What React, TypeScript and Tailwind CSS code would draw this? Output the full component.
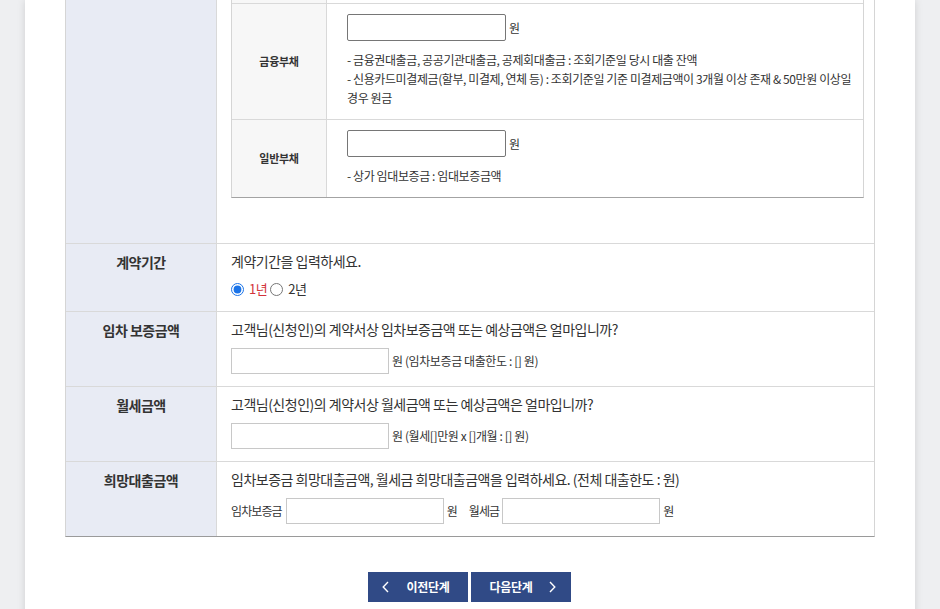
import React from 'react';

function Chevron({ dir }: { dir: 'left' | 'right' }) {
  return (
    <svg width="7" height="12" viewBox="0 0 7 12" fill="none" className="shrink-0">
      {dir === 'left' ? (
        <polyline points="6,1 1.2,6 6,11" stroke="#ffffff" strokeWidth="1.4" />
      ) : (
        <polyline points="1,1 5.8,6 1,11" stroke="#ffffff" strokeWidth="1.4" />
      )}
    </svg>
  );
}

function MoneyInput({ className = '' }: { className?: string }) {
  return (
    <input
      type="text"
      className={`w-[158px] h-[26px] border border-[#c8c8c8] bg-white px-2 text-[12px] outline-none ${className}`}
    />
  );
}

export default function App() {
  return (
    <div className="min-h-screen bg-[#eeeff1] flex justify-center font-['Noto_Sans_CJK_KR','Noto_Sans',sans-serif] text-[#333]">
      <div className="w-[890px] bg-white shadow-[0_0_8px_rgba(0,0,0,0.13)] px-[40px] pb-[40px]">
        {/* Form table */}
        <div className="border-l border-r border-b border-l-[#d5d5d5] border-r-[#d5d5d5] border-b-[#9a9a9a]">
          {/* 부채 row (label above the fold) */}
          <div className="flex">
            <div className="w-[151px] shrink-0 bg-[#e8ebf4] border-r border-[#d9d9d9]" />
            <div className="flex-1 pl-[14px] pr-[10px] pb-[45px]">
              <div className="border-l border-r border-b border-l-[#d5d5d5] border-r-[#d5d5d5] border-b-[#a3a3a3]">
                <div className="flex h-[3px]">
                  <div className="w-[95px] shrink-0 bg-[#f7f7f7] border-r border-[#d9d9d9]" />
                  <div className="flex-1" />
                </div>

                {/* 금융부채 */}
                <div className="flex border-t border-[#d9d9d9]">
                  <div className="w-[95px] shrink-0 bg-[#f7f7f7] border-r border-[#d9d9d9] flex items-center justify-center text-[11px] font-bold tracking-[-0.3px]">
                    금융부채
                  </div>
                  <div className="flex-1 pl-[20px] pt-[10px] pb-[12px]">
                    <div className="flex items-center">
                      <input
                        type="text"
                        className="w-[159px] h-[27px] border border-[#767676] rounded-[2px] bg-white outline-none"
                      />
                      <span className="ml-[3px] text-[12px] tracking-[-0.4px]">원</span>
                    </div>
                    <div className="mt-[9px] text-[12px] leading-[19px] tracking-[-0.4px] whitespace-nowrap">
                      <div>- 금융권대출금, 공공기관대출금, 공제회대출금 : 조회기준일 당시 대출 잔액</div>
                      <div>- 신용카드미결제금(할부, 미결제, 연체 등) : 조회기준일 기준 미결제금액이 3개월 이상 존재 &amp; 50만원 이상일</div>
                      <div>경우 원금</div>
                    </div>
                  </div>
                </div>

                {/* 일반부채 */}
                <div className="flex border-t border-[#d9d9d9]">
                  <div className="w-[95px] shrink-0 bg-[#f7f7f7] border-r border-[#d9d9d9] flex items-center justify-center text-[11px] font-bold tracking-[-0.3px]">
                    일반부채
                  </div>
                  <div className="flex-1 pl-[20px] pt-[10px] pb-[12px]">
                    <div className="flex items-center">
                      <input
                        type="text"
                        className="w-[159px] h-[27px] border border-[#767676] rounded-[2px] bg-white outline-none"
                      />
                      <span className="ml-[3px] text-[12px] tracking-[-0.4px]">원</span>
                    </div>
                    <div className="mt-[9px] text-[12px] leading-[19px] tracking-[-0.4px] whitespace-nowrap">
                      - 상가 임대보증금 : 임대보증금액
                    </div>
                  </div>
                </div>
              </div>
            </div>
          </div>

          {/* 계약기간 */}
          <div className="flex border-t border-[#d9d9d9]">
            <div className="w-[151px] shrink-0 bg-[#e8ebf4] border-r border-[#d9d9d9] pt-[8px] text-center text-[14px] font-bold leading-[20px] tracking-[-0.5px]">
              계약기간
            </div>
            <div className="flex-1 pl-[14px] pr-[10px] pt-[7px] pb-[12px]">
              <div className="text-[14px] leading-[20px] tracking-[-0.5px]">계약기간을 입력하세요.</div>
              <div className="mt-[8px] flex items-center h-[20px] text-[13px] tracking-[-0.5px]">
                <input type="radio" name="period" defaultChecked className="w-[13px] h-[13px] m-0 accent-[#1a73e8]" />
                <span className="ml-[5px] text-[#d2323a]">1년</span>
                <input type="radio" name="period" className="ml-[3px] w-[13px] h-[13px] m-0" />
                <span className="ml-[5px]">2년</span>
              </div>
            </div>
          </div>

          {/* 임차 보증금액 */}
          <div className="flex border-t border-[#d9d9d9]">
            <div className="w-[151px] shrink-0 bg-[#e8ebf4] border-r border-[#d9d9d9] pt-[8px] text-center text-[14px] font-bold leading-[20px] tracking-[-0.5px]">
              임차 보증금액
            </div>
            <div className="flex-1 pl-[14px] pr-[10px] pt-[7px] pb-[12px]">
              <div className="text-[14px] leading-[20px] tracking-[-0.5px]">
                고객님(신청인)의 계약서상 임차보증금액 또는 예상금액은 얼마입니까?
              </div>
              <div className="mt-[9px] flex items-center">
                <MoneyInput />
                <span className="ml-[3px] text-[12px] tracking-[-0.4px]">원 (임차보증금 대출한도 : [] 원)</span>
              </div>
            </div>
          </div>

          {/* 월세금액 */}
          <div className="flex border-t border-[#d9d9d9]">
            <div className="w-[151px] shrink-0 bg-[#e8ebf4] border-r border-[#d9d9d9] pt-[8px] text-center text-[14px] font-bold leading-[20px] tracking-[-0.5px]">
              월세금액
            </div>
            <div className="flex-1 pl-[14px] pr-[10px] pt-[7px] pb-[12px]">
              <div className="text-[14px] leading-[20px] tracking-[-0.5px]">
                고객님(신청인)의 계약서상 월세금액 또는 예상금액은 얼마입니까?
              </div>
              <div className="mt-[9px] flex items-center">
                <MoneyInput />
                <span className="ml-[3px] text-[12px] tracking-[-0.4px]">원 (월세[]만원 x []개월 : [] 원)</span>
              </div>
            </div>
          </div>

          {/* 희망대출금액 */}
          <div className="flex border-t border-[#d9d9d9]">
            <div className="w-[151px] shrink-0 bg-[#e8ebf4] border-r border-[#d9d9d9] pt-[8px] text-center text-[14px] font-bold leading-[20px] tracking-[-0.5px]">
              희망대출금액
            </div>
            <div className="flex-1 pl-[14px] pr-[10px] pt-[7px] pb-[12px]">
              <div className="text-[14px] leading-[20px] tracking-[-0.5px]">
                임차보증금 희망대출금액, 월세금 희망대출금액을 입력하세요. (전체 대출한도 : 원)
              </div>
              <div className="mt-[9px] flex items-center text-[12px] tracking-[-0.9px]">
                <span>임차보증금</span>
                <MoneyInput className="ml-[4px]" />
                <span className="ml-[3px]">원</span>
                <span className="ml-[12px]">월세금</span>
                <MoneyInput className="ml-[3px]" />
                <span className="ml-[3px]">원</span>
              </div>
            </div>
          </div>
        </div>

        {/* Step buttons */}
        <div className="mt-[35px] flex justify-center gap-[3px] -translate-x-[1px]">
          <button className="w-[100px] h-[30px] bg-[#304a86] text-white text-[12px] font-bold tracking-[-0.3px] flex items-center pl-[14px]">
            <Chevron dir="left" />
            <span className="ml-[18px]">이전단계</span>
          </button>
          <button className="w-[100px] h-[30px] bg-[#304a86] text-white text-[12px] font-bold tracking-[-0.3px] flex items-center pl-[19px]">
            <span>다음단계</span>
            <span className="ml-[17px] flex items-center">
              <Chevron dir="right" />
            </span>
          </button>
        </div>
      </div>
    </div>
  );
}
